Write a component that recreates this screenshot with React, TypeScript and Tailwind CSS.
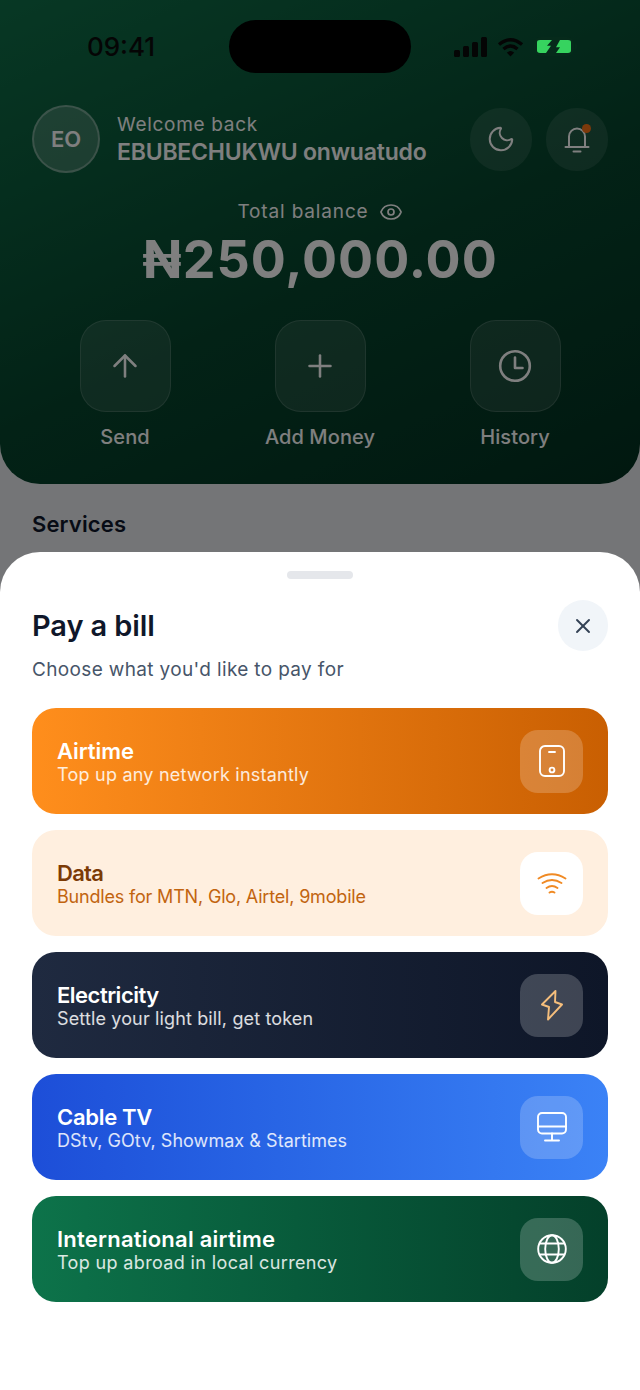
import { ArrowUp, Eye, Moon, Plus, X } from 'lucide-react';
import type { ReactNode } from 'react';

function PhoneIcon() {
  return (
    <svg width="36" height="36" viewBox="0 0 36 36" fill="none" stroke="currentColor" strokeWidth="1.9" strokeLinecap="round">
      <rect x="6" y="3" width="24" height="30" rx="5" />
      <path d="M15 9h6" />
      <circle cx="18" cy="27" r="2.4" />
    </svg>
  );
}

function WifiIcon() {
  return (
    <svg width="36" height="36" viewBox="0 0 36 36" fill="none" stroke="currentColor" strokeWidth="1.9" strokeLinecap="round">
      <path d="M4.5 13.5Q18 5 31.5 13.5" />
      <path d="M8.5 18Q18 12 27.5 18" />
      <path d="M12.5 23Q18 19 23.5 23" />
      <path d="M15.5 27.5Q18 26 20.5 27.5" />
    </svg>
  );
}

function BoltIcon() {
  return (
    <svg width="36" height="36" viewBox="0 0 36 36" fill="none" stroke="currentColor" strokeWidth="1.9" strokeLinejoin="round">
      <path d="M21.5 4 8 17.5l7 2.5-1 12.5 14-15-7-2.5z" />
    </svg>
  );
}

function MonitorIcon() {
  return (
    <svg width="36" height="36" viewBox="0 0 36 36" fill="none" stroke="currentColor" strokeWidth="1.9" strokeLinecap="round">
      <rect x="4" y="4" width="28" height="20.5" rx="4" />
      <path d="M4 17.5h28M18 24.5v7M11 31.5h14" />
    </svg>
  );
}

function GlobeIcon() {
  return (
    <svg width="36" height="36" viewBox="0 0 36 36" fill="none" stroke="currentColor" strokeWidth="1.9" strokeLinecap="round">
      <circle cx="18" cy="18" r="13.8" />
      <ellipse cx="18" cy="18" rx="6.8" ry="13.8" />
      <path d="M6 12.5h24M6 23.5h24" />
    </svg>
  );
}

function ClockIcon() {
  return (
    <svg width="36" height="36" viewBox="0 0 36 36" fill="none" stroke="currentColor" strokeWidth="2.6" strokeLinecap="round" strokeLinejoin="round">
      <circle cx="18" cy="18" r="14.8" />
      <path d="M18 9.5V20h7.5" />
    </svg>
  );
}

function BellIcon() {
  return (
    <svg width="30" height="30" viewBox="0 0 30 30" fill="none" stroke="currentColor" strokeWidth="2" strokeLinecap="round">
      <path d="M7 23V12.5a8 8 0 0 1 16 0V23" />
      <path d="M3.5 23h23" />
      <path d="M11.5 27.5h7" />
    </svg>
  );
}

function StatusBar() {
  return (
    <div className="relative z-20 flex h-[53px] items-center">
      <div className="w-[229px] pl-[13px] text-center text-[26px] leading-none font-medium text-[#050505]">09:41</div>
      <div className="h-[53px] w-[182px] rounded-[27px] bg-black" />
      <div className="flex items-center pl-[43px]">
        <svg width="33" height="20" viewBox="0 0 33 20" fill="#050505">
          <rect x="0" y="13" width="6" height="7" rx="1.5" />
          <rect x="9" y="9" width="6" height="11" rx="1.5" />
          <rect x="18" y="5" width="6" height="15" rx="1.5" />
          <rect x="27" y="0" width="6" height="20" rx="1.5" />
        </svg>
        <svg className="ml-[10px]" width="27" height="20" viewBox="0 0 27 20" fill="none" stroke="#050505" strokeWidth="3.4">
          <path d="M2 7.5Q13.5-2 25 7.5" />
          <path d="M6.5 12Q13.5 6 20.5 12" />
          <path d="M13.5 19.5 9.8 15.6Q13.5 12.6 17.2 15.6z" fill="#050505" stroke="none" />
        </svg>
        <div className="ml-[10px] flex items-center">
          <div className="flex h-[19px] w-[40px] items-center justify-center rounded-[7px] bg-[#062a1b]">
            <svg width="34" height="13" viewBox="0 0 34 16" preserveAspectRatio="none" fill="#36d35f">
              <path d="M3 0h12l-5 7h4l-5 9H3a3 3 0 0 1-3-3V3a3 3 0 0 1 3-3z" />
              <path d="M31 0H23l-4 9h4l-4 7h12a3 3 0 0 0 3-3V3a3 3 0 0 0-3-3z" />
            </svg>
          </div>
          <div className="ml-[1px] h-[7px] w-[2px] rounded-r-sm bg-[#062a1b]" />
        </div>
      </div>
    </div>
  );
}

function RoundButton({ children, dot }: { children: ReactNode; dot?: boolean }) {
  return (
    <div className="relative flex h-[63px] w-[62px] items-center justify-center rounded-full bg-white/10 text-white">
      {children}
      {dot && <span className="absolute top-[16px] right-[17px] h-[9px] w-[9px] rounded-full bg-[#f97316]" />}
    </div>
  );
}

function Action({ label, children }: { label: string; children: ReactNode }) {
  return (
    <div className="flex w-[130px] flex-col items-center">
      <div className="flex h-[92px] w-[91px] items-center justify-center rounded-[26px] border border-white/15 bg-white/10 text-white">
        {children}
      </div>
      <div className="mt-[11px] text-[20px] leading-7 font-medium tracking-[0.1px] text-white">{label}</div>
    </div>
  );
}

const bills = [
  {
    title: 'Airtime',
    sub: 'Top up any network instantly',
    card: 'bg-gradient-to-r from-[#ff8e1c] to-[#c95f02]',
    titleColor: 'text-white tracking-[-0.05px]',
    subColor: 'text-white/85 tracking-[0.23px]',
    box: 'bg-white/20 text-white',
    icon: <PhoneIcon />,
  },
  {
    title: 'Data',
    sub: 'Bundles for MTN, Glo, Airtel, 9mobile',
    card: 'bg-[#ffefdf]',
    titleColor: 'text-[#7c3a05] tracking-[-0.7px]',
    subColor: 'text-[#c2640f] tracking-[-0.18px]',
    box: 'bg-white text-[#f08a24]',
    icon: <WifiIcon />,
  },
  {
    title: 'Electricity',
    sub: 'Settle your light bill, get token',
    card: 'bg-gradient-to-r from-[#1f2a40] to-[#0e1628]',
    titleColor: 'text-white tracking-[-0.5px]',
    subColor: 'text-white/85 tracking-[0.14px]',
    box: 'bg-white/20 text-[#f5be7c]',
    icon: <BoltIcon />,
  },
  {
    title: 'Cable TV',
    sub: 'DStv, GOtv, Showmax & Startimes',
    card: 'bg-gradient-to-r from-[#1d4ed8] to-[#3b82f6]',
    titleColor: 'text-white tracking-[-0.3px]',
    subColor: 'text-white/85 tracking-[0.04px]',
    box: 'bg-white/20 text-white',
    icon: <MonitorIcon />,
  },
  {
    title: 'International airtime',
    sub: 'Top up abroad in local currency',
    card: 'bg-gradient-to-r from-[#0d734a] to-[#04402a]',
    titleColor: 'text-white tracking-[0.23px]',
    subColor: 'text-white/85 tracking-[0.36px]',
    box: 'bg-white/20 text-white',
    icon: <GlobeIcon />,
  },
];

export default function App() {
  return (
    <div className="relative h-[1390px] w-[640px] overflow-hidden bg-[#e8ebee] font-['Inter',sans-serif]">
      <div className="h-[484px] rounded-b-[40px] bg-[linear-gradient(155deg,#0f7049,#06452d_55%,#023020)] pt-5">
        <StatusBar />

        <div className="mt-8 flex h-[68px] items-center justify-between px-8">
          <div className="flex items-center">
            <div className="flex h-[68px] w-[68px] items-center justify-center rounded-full border-2 border-white/30 bg-white/20 text-[22px] font-semibold text-white">
              EO
            </div>
            <div className="ml-[17px]">
              <div className="text-[19px] leading-[26px] tracking-[0.7px] text-white">Welcome back</div>
              <div className="text-[23px] leading-[28px] font-semibold tracking-[-0.2px] text-white">EBUBECHUKWU onwuatudo</div>
            </div>
          </div>
          <div className="flex gap-[14px]">
            <RoundButton>
              <Moon size={30} strokeWidth={1.6} />
            </RoundButton>
            <RoundButton dot>
              <BellIcon />
            </RoundButton>
          </div>
        </div>

        <div className="mt-[27px] flex h-6 items-center justify-center gap-[10px] text-white">
          <span className="text-[19px] leading-6 tracking-[0.85px]">Total balance</span>
          <Eye size={24} strokeWidth={1.7} />
        </div>
        <div className="mt-1 text-center text-[52px] leading-[64px] font-bold tracking-[1px] text-white">₦250,000.00</div>

        <div className="mt-7 flex justify-between px-[60px]">
          <Action label="Send">
            <ArrowUp size={36} strokeWidth={1.7} />
          </Action>
          <Action label="Add Money">
            <Plus size={36} strokeWidth={1.7} />
          </Action>
          <Action label="History">
            <ClockIcon />
          </Action>
        </div>
      </div>

      <div className="mt-6 px-8 text-[22px] leading-8 font-semibold tracking-[0.15px] text-[#0f172a]">Services</div>

      <div className="absolute inset-0 z-10 bg-black/50" />

      <div className="absolute top-[552px] right-0 left-0 z-20 h-[838px] rounded-t-[40px] bg-white px-8">
        <div className="mx-auto mt-[19px] h-2 w-[66px] rounded-full bg-[#e5e7eb]" />
        <div className="mt-[21px] flex h-[51px] items-center justify-between">
          <h2 className="text-[29px] font-semibold tracking-[-0.1px] text-[#0f172a]">Pay a bill</h2>
          <div className="flex h-[51px] w-[50px] items-center justify-center rounded-full bg-[#f1f5f9] text-[#334155]">
            <X size={24} strokeWidth={1.9} />
          </div>
        </div>
        <p className="mt-[5px] text-[19px] leading-7 tracking-[0.35px] text-[#475569]">Choose what you'd like to pay for</p>

        <div className="mt-[24px] flex flex-col gap-4">
          {bills.map((bill) => (
            <div key={bill.title} className={`flex h-[106px] items-center justify-between rounded-[24px] px-[25px] ${bill.card}`}>
              <div className="pt-[4px]">
                <div className={`text-[22px] leading-[24px] font-semibold ${bill.titleColor}`}>{bill.title}</div>
                <div className={`text-[18px] leading-[24px] ${bill.subColor}`}>{bill.sub}</div>
              </div>
              <div className={`flex h-[63px] w-[63px] items-center justify-center rounded-[18px] ${bill.box}`}>{bill.icon}</div>
            </div>
          ))}
        </div>
      </div>
    </div>
  );
}
